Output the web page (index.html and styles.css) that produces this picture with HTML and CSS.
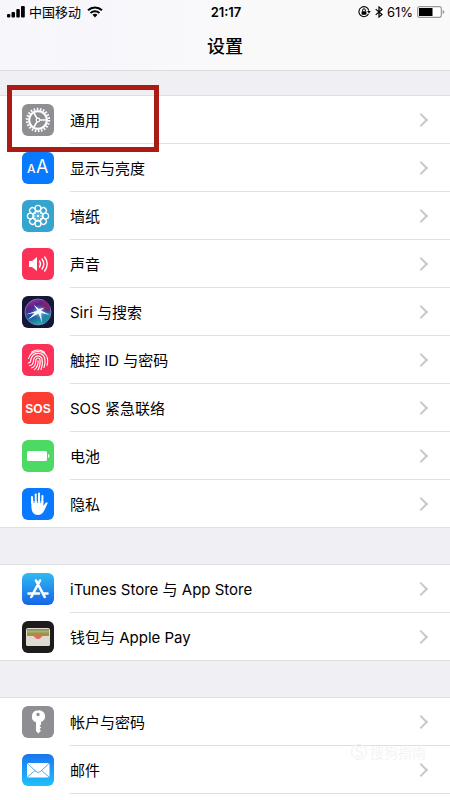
FILE: index.html
```html
<!DOCTYPE html>
<html lang="zh-CN">
<head>
  <meta charset="UTF-8" />
  <meta name="viewport" content="width=device-width, initial-scale=1.0" />
  <title>设置</title>
  <link rel="stylesheet" href="styles.css">
</head>
<body>
  <header class="header">
    <div class="status-bar">
      <div class="status-left">
        <svg class="signal" width="18" height="12" viewBox="0 0 18 12" aria-hidden="true">
          <rect x="0" y="8" width="3.3" height="3.500" rx="1" />
          <rect x="4.5" y="6" width="3.5" height="5.500" rx="1" />
          <rect x="9.300" y="3" width="3.5" height="8.500" rx="1" />
          <rect x="14" y="0" width="3.800" height="11.500" rx="1" />
        </svg>
        <span>中国移动</span>
        <svg class="wifi" width="16" height="12" viewBox="0 0 16 12" aria-hidden="true">
          <g fill="none" stroke="#000" stroke-width="2">
            <path d="M1 4.2a10.2 10.2 0 0 1 14 0" />
            <path d="M3.6 7a6.4 6.4 0 0 1 8.8 0" />
          </g>
          <path d="M5.5 8.8a3.7 3.7 0 0 1 5 0L8 11.4z" />
        </svg>
      </div>
      <time class="clock">21:17</time>
      <div class="status-right">
        <svg width="13" height="12" viewBox="0 0 13 12" aria-hidden="true">
          <path d="M10.5 7.7A5 5 0 1 1 10.8 4.6" fill="none" stroke="#000" stroke-width="1.1" />
          <path d="M9 5h3.8l-1.8 2.5z" />
          <rect x="3.6" y="5.2" width="4.8" height="3.5" rx=".4" />
          <path d="M4.6 5.5V4.2a1.4 1.4 0 0 1 2.8 0v1.3" fill="none" stroke="#000" />
        </svg>
        <svg width="8" height="12" viewBox="0 0 8 12" aria-hidden="true">
          <path d="M.7 3.1 7 8.5 4 11V1l3 2.4L.7 8.9" fill="none" stroke="#000" stroke-width="1.2" />
        </svg>
        <span>61%</span>
        <svg width="28" height="12" viewBox="0 0 28 12" aria-hidden="true">
          <rect x=".7" y=".7" width="23.6" height="10.6" rx="2" fill="#fff" stroke="#999" stroke-width="1.2" />
          <rect x="2" y="2" width="13.5" height="8" />
          <path d="M25.6 4v4q1.8-.5 1.8-2t-1.8-2z" fill="#999" />
        </svg>
      </div>
    </div>
    <h1>设置</h1>
  </header>

  <main>
    <nav class="group">
      <a class="row marked" href="#general">
        <svg class="icon" viewBox="0 0 32 32" aria-hidden="true">
          <rect width="32" height="32" rx="6" fill="#8e8e93" />
          <g fill="none" stroke="#fff">
            <circle cx="16" cy="16" r="11" stroke-width="2.4" stroke-dasharray="1.6 1.54" />
            <circle cx="16" cy="16" r="8.900" stroke-width="2.2" />
            <circle cx="16" cy="16" r="1.800" stroke-width="1.2" />
            <path d="M18 16h7M15 14.3 11.5 8.2M15 17.7l-3.5 6.1" stroke-width="1.7" />
          </g>
        </svg>
        <span class="label">通用</span>
      </a>
      <a class="row" href="#display">
        <svg class="icon" viewBox="0 0 32 32" aria-hidden="true">
          <rect width="32" height="32" rx="6" fill="#087aff" />
          <text class="glyph" x="5" y="21" font-size="12" font-weight="500">A</text>
          <text class="glyph" x="14" y="21" font-size="18">A</text>
        </svg>
        <span class="label">显示与亮度</span>
      </a>
      <a class="row" href="#wallpaper">
        <svg class="icon" viewBox="0 0 32 32" aria-hidden="true">
          <rect width="32" height="32" rx="6" fill="#35a5cf" />
          <g fill="none" stroke="#fff" stroke-width="1.300">
            <g id="petals">
              <circle cx="16" cy="8.300" r="2.900" />
              <circle cx="16" cy="23.700" r="2.900" />
              <circle cx="8.300" cy="16" r="2.900" />
              <circle cx="23.700" cy="16" r="2.900" />
            </g>
            <use href="#petals" transform="rotate(45 16 16)" />
            <circle cx="16" cy="16" r="4.600" stroke-width="1.400" />
            <path d="M16 11.200v2.600M16 18.200v2.600M11.200 16h2.600M18.200 16h2.600M12.600 12.600l1.800 1.800M17.600 17.600l1.800 1.800M19.400 12.600l-1.800 1.800M14.400 17.600l-1.800 1.800" stroke-width=".8" />
          </g>
          <circle cx="16" cy="16" r="1.300" fill="#fff" />
        </svg>
        <span class="label">墙纸</span>
      </a>
      <a class="row" href="#sounds">
        <svg class="icon" viewBox="0 0 32 32" aria-hidden="true">
          <rect width="32" height="32" rx="6" fill="#fc3158" />
          <path d="M7 13h3l5-4v14l-5-4H7z" fill="#fff" />
          <path d="M17.5 13q2 3 0 6M20 11q3.600 5 0 10M22.700 9q5 7 0 14" fill="none" stroke="#fff" stroke-width="1.4" stroke-linecap="round" />
        </svg>
        <span class="label">声音</span>
      </a>
      <a class="row" href="#siri">
        <svg class="icon" viewBox="0 0 32 32" aria-hidden="true">
          <defs>
            <linearGradient id="siriRing" x1="0" y1="0" x2=".4" y2="1">
              <stop offset="0" stop-color="#b03bb0" />
              <stop offset=".35" stop-color="#5a2387" />
              <stop offset=".65" stop-color="#1c4d9d" />
              <stop offset="1" stop-color="#22a7a4" />
            </linearGradient>
            <radialGradient id="siriGlow">
              <stop offset="0" stop-color="#fff" />
              <stop offset=".35" stop-color="#8ecdf0" stop-opacity=".6" />
              <stop offset="1" stop-color="#3158c0" stop-opacity="0" />
            </radialGradient>
          </defs>
          <rect width="32" height="32" rx="6" fill="#151738" />
          <circle cx="16" cy="16" r="13" fill="url(#siriRing)" stroke="#8585ba" stroke-width=".8" />
          <path d="M17 16l11 1q0 7-6 11z" fill="#2187a8" />
          <path d="M17 14 22 4q7 4 6 11z" fill="#7d2470" />
          <circle cx="17" cy="16" r="8" fill="url(#siriGlow)" />
          <path d="M15.500 14.500 11.500 8.500l5.500 4.500 5.500-1.500-3.500 3 9 4.500-9-2 1 9.500-3.500-9-10.500 6 6.500-6.500-9 1.500z" fill="#f2faff" />
        </svg>
        <span class="label">Siri 与搜索</span>
      </a>
      <a class="row" href="#touch-id">
        <svg class="icon" viewBox="0 0 32 32" aria-hidden="true">
          <rect width="32" height="32" rx="6" fill="#fc3158" />
          <g fill="none" stroke="#fff" stroke-width="1.1" stroke-linecap="round">
            <path d="M9.500 8.200q6.500-4.500 13 0" />
            <path d="M6.500 14.500C8 6 23 4.500 25.500 14.500q.7 4-.5 7" />
            <path d="M6.300 19c3 0 2.200-3 3-5C12 7.500 21 8 22.800 14.500q.9 5-.8 9" />
            <path d="M7.500 21.500c5 0 3.500-5 4.500-7 2-4 7-3 8 .5q1.200 5-1 10.500" />
            <path d="M9.500 24c5-1 4-6 4.500-8.500.6-2 3.400-2 4 0q.8 5.500-2 10.500" />
            <path d="M12.500 25.700q4-3.500 3.500-9" />
          </g>
        </svg>
        <span class="label">触控 ID 与密码</span>
      </a>
      <a class="row" href="#sos">
        <svg class="icon" viewBox="0 0 32 32" aria-hidden="true">
          <rect width="32" height="32" rx="6" fill="#fc3d32" />
          <text class="glyph sos" x="16" y="21" text-anchor="middle">SOS</text>
        </svg>
        <span class="label">SOS 紧急联络</span>
      </a>
      <a class="row" href="#battery">
        <svg class="icon" viewBox="0 0 32 32" aria-hidden="true">
          <rect width="32" height="32" rx="6" fill="#4cd964" />
          <rect x="5" y="11" width="20" height="10" rx="1.5" fill="#fff" />
          <path d="M26 14v4q1.500-.5 1.500-2t-1.500-2z" fill="#fff" />
        </svg>
        <span class="label">电池</span>
      </a>
      <a class="row" href="#privacy">
        <svg class="icon" viewBox="0 0 32 32" aria-hidden="true">
          <rect width="32" height="32" rx="6" fill="#087aff" />
          <path d="M10.300 15 10 9M13.700 15V6.500M17 15V5.500M20.200 15l.2-7" fill="none" stroke="#fff" stroke-width="2.100" stroke-linecap="round" />
          <path d="M9.200 13h12.200v5l2.300-3.200q1.300-1 2 .1L22.500 22q-2 5-7 5-5.300 0-6-6.500z" fill="#fff" />
          <path d="M12 8v7M15.400 7v8M18.700 7v8" stroke="#087aff" stroke-width=".8" />
        </svg>
        <span class="label">隐私</span>
      </a>
    </nav>

    <nav class="group">
      <a class="row" href="#store">
        <svg class="icon" viewBox="0 0 32 32" aria-hidden="true">
          <defs>
            <linearGradient id="storeBlue" x1="0" y1="0" x2="0" y2="1">
              <stop offset="0" stop-color="#31baf2" />
              <stop offset="1" stop-color="#1664e8" />
            </linearGradient>
          </defs>
          <rect width="32" height="32" rx="6" fill="url(#storeBlue)" />
          <path d="M14 7.500 22.700 24M18 7.500 9.300 24M6.500 20.500h10.500M21.500 20.500h4" fill="none" stroke="#fff" stroke-width="2.600" stroke-linecap="round" />
        </svg>
        <span class="label">iTunes Store 与 App Store</span>
      </a>
      <a class="row" href="#wallet">
        <svg class="icon" viewBox="0 0 32 32" aria-hidden="true">
          <rect width="32" height="32" rx="6" fill="#1d1c1b" />
          <rect x="4" y="7" width="24" height="18" rx="2" fill="#e1ddd3" />
          <path d="M5 8h22v3H5z" fill="#559cb5" />
          <path d="M5 9.500h22V12H5z" fill="#d8a536" />
          <path d="M5 11.500h22V14H5z" fill="#73a757" />
          <path d="M5 13.500h22v4h-7q-1.500 3-4 3t-4-3H5z" fill="#e66b55" />
          <path d="M4 15h7q1 0 1.500 1 1 2 3.500 2t3.500-2q.5-1 1.500-1h7v8q0 2-2 2H6q-2 0-2-2z" fill="#dedbd1" />
        </svg>
        <span class="label">钱包与 Apple Pay</span>
      </a>
    </nav>

    <nav class="group">
      <a class="row" href="#accounts">
        <svg class="icon" viewBox="0 0 32 32" aria-hidden="true">
          <rect width="32" height="32" rx="6" fill="#8e8e93" />
          <path fill="#fff" fill-rule="evenodd" d="M16 4.500a6 6 0 0 0-2 11.700V25l2.300 2.500 2.700-2.800-1.500-1.500 1.700-1.700-1.600-1.600 1.400-1.500v-2.300A6 6 0 0 0 16 4.500zm0 2.300a1.700 1.700 0 1 1 0 3.400 1.700 1.700 0 0 1 0-3.400z" />
        </svg>
        <span class="label">帐户与密码</span>
      </a>
      <a class="row" href="#mail">
        <svg class="icon" viewBox="0 0 32 32" aria-hidden="true">
          <defs>
            <linearGradient id="mailBlue" x1="0" y1="0" x2="0" y2="1">
              <stop offset="0" stop-color="#1a75ed" />
              <stop offset="1" stop-color="#20c1fa" />
            </linearGradient>
          </defs>
          <rect width="32" height="32" rx="6" fill="url(#mailBlue)" />
          <rect x="5" y="9" width="22.500" height="14.500" rx="1.500" fill="#fff" />
          <path d="m5.500 9.500 8.500 8q2.200 2 4.400 0l8.600-8M5.500 23l8-7M27 23l-8-7" fill="none" stroke="#4a9ddd" stroke-width=".9" />
        </svg>
        <span class="label">邮件</span>
      </a>
    </nav>
    <div class="watermark"><span class="watermark-logo">S</span>搜狗指南</div>
  </main>
</body>
</html>
```
FILE: styles.css
```css
*,
*::before,
*::after {
  box-sizing: border-box;
}
:root {
  --line: #e0e0e3;
  --gap: #efeff4;
  --mark: #ab1b14;
}
body {
  margin: 0;
  min-height: 100vh;
  display: flex;
  flex-direction: column;
  background: var(--gap);
  color: #000;
  font-family: Inter, "Noto Sans CJK SC", sans-serif;
}
.header {
  background: linear-gradient(90deg, #f6f6fc, #f9f9fa 50%);
  border-bottom: 1px solid #dcdce0;
}
.status-bar {
  display: grid;
  grid-template-columns: 1fr auto 1fr;
  align-items: center;
  height: 24px;
  padding: 0 5px 0 7px;
  font-size: 13px;
  line-height: 24px;
}
.status-left,
.status-right {
  display: flex;
  align-items: center;
  gap: 4px;
}
.status-left .wifi {
  margin-left: 2px;
}
.status-right {
  justify-content: flex-end;
}
.clock {
  font-size: 13px;
  font-weight: 600;
}
h1 {
  margin: 0;
  font-size: 18px;
  line-height: 46px;
  font-weight: 500;
  text-align: center;
}
main {
  position: relative;
  flex: 1;
  display: flex;
  flex-direction: column;
  gap: 38px;
  padding-top: 25px;
}
.group {
  background: #fff;
  box-shadow: 0 0 0 1px var(--line);
}
.group:last-of-type {
  flex: 1;
}
.row {
  position: relative;
  display: flex;
  align-items: center;
  padding-left: 22px;
  color: inherit;
  text-decoration: none;
}
.icon {
  width: 32px;
  height: 32px;
  margin-right: 16px;
  flex-shrink: 0;
}
.label {
  flex: 1;
  display: flex;
  align-items: center;
  justify-content: space-between;
  height: 48px;
  padding-right: 24px;
  border-bottom: 1px solid var(--line);
  font-size: 15px;
  white-space: pre;
}
.label::after {
  content: "";
  width: 10px;
  height: 10px;
  border-top: 2px solid #c7c7cc;
  border-right: 2px solid #c7c7cc;
  transform: rotate(45deg);
}
.group:not(:last-of-type) .row:last-child .label {
  height: 47px;
  border-bottom: 0;
}
/* red frame around the highlighted row */
.marked::before {
  content: "";
  position: absolute;
  z-index: 1;
  left: 7px;
  top: -11px;
  width: 152px;
  height: 67px;
  border: 5px solid var(--mark);
}
.glyph {
  fill: #fff;
  font-family: Inter, sans-serif;
}
.sos {
  font-family: "Liberation Sans", sans-serif;
  font-size: 12px;
  font-weight: 700;
}
.watermark {
  position: absolute;
  right: 24px;
  bottom: 38px;
  display: flex;
  align-items: center;
  gap: 3px;
  color: #f4f4f4;
  font-size: 14px;
}
.watermark-logo {
  width: 16px;
  height: 16px;
  border: 1px solid #f0f0f0;
  border-radius: 50%;
  line-height: 14px;
  text-align: center;
}
```
